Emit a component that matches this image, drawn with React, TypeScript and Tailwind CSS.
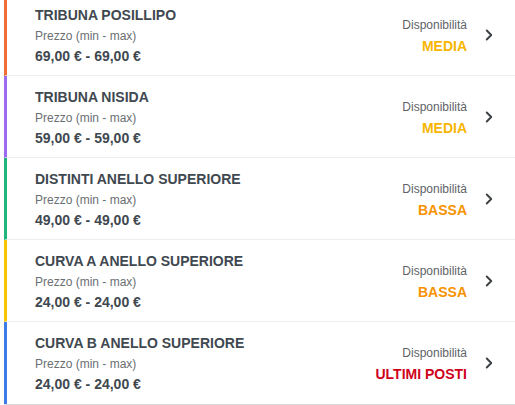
import React from "react"
import { ChevronRight } from "lucide-react"

type Sector = {
  name: string
  price: string
  bar: string
  level: string
  levelColor: string
}

const sectors: Sector[] = [
  { name: "TRIBUNA POSILLIPO", price: "69,00 € - 69,00 €", bar: "border-l-[#f26c35]", level: "MEDIA", levelColor: "text-[#f7b500]" },
  { name: "TRIBUNA NISIDA", price: "59,00 € - 59,00 €", bar: "border-l-[#9c6cf0]", level: "MEDIA", levelColor: "text-[#f7b500]" },
  { name: "DISTINTI ANELLO SUPERIORE", price: "49,00 € - 49,00 €", bar: "border-l-[#1fb67c]", level: "BASSA", levelColor: "text-[#f79200]" },
  { name: "CURVA A ANELLO SUPERIORE", price: "24,00 € - 24,00 €", bar: "border-l-[#f7c600]", level: "BASSA", levelColor: "text-[#f79200]" },
  { name: "CURVA B ANELLO SUPERIORE", price: "24,00 € - 24,00 €", bar: "border-l-[#3d7be8]", level: "ULTIMI POSTI", levelColor: "text-[#d0021b]" },
]

export default function App() {
  return (
    <div className="w-[515px] h-[405px] overflow-hidden bg-white" style={{ fontFamily: "Arial, 'Liberation Sans', sans-serif" }}>
      <div className="-mt-[6px] ml-[4px] border-b-2 border-b-[#d9d9d9]">
        {sectors.map((s, i) => (
          <div
            key={s.name}
            className={`flex items-center h-[82px] border-l-[3px] ${s.bar} ${i < sectors.length - 1 ? "border-b border-b-[#eeeeee]" : ""}`}
          >
            <div className="flex-1 pl-[28px] pt-[1px]">
              <div className="text-[14px] font-bold text-[#404850] leading-[16px]">{s.name}</div>
              <div className="text-[12px] text-[#6b6f73] leading-[14px] mt-[6px]">Prezzo (min - max)</div>
              <div className="text-[14px] font-bold text-[#404850] leading-[16px] mt-[5px]">{s.price}</div>
            </div>
            <div className="flex flex-col items-end pr-[4px] pt-[2px]">
              <div className="text-[12px] text-[#5f6368] leading-[14px]">Disponibilità</div>
              <div className={`text-[14px] font-bold leading-[16px] mt-[6px] ${s.levelColor}`}>{s.level}</div>
            </div>
            <div className="w-[44px] flex justify-start pl-[9px]">
              <ChevronRight className="w-[18px] h-[18px] text-[#3c4043]" strokeWidth={2.5} />
            </div>
          </div>
        ))}
      </div>
    </div>
  )
}
